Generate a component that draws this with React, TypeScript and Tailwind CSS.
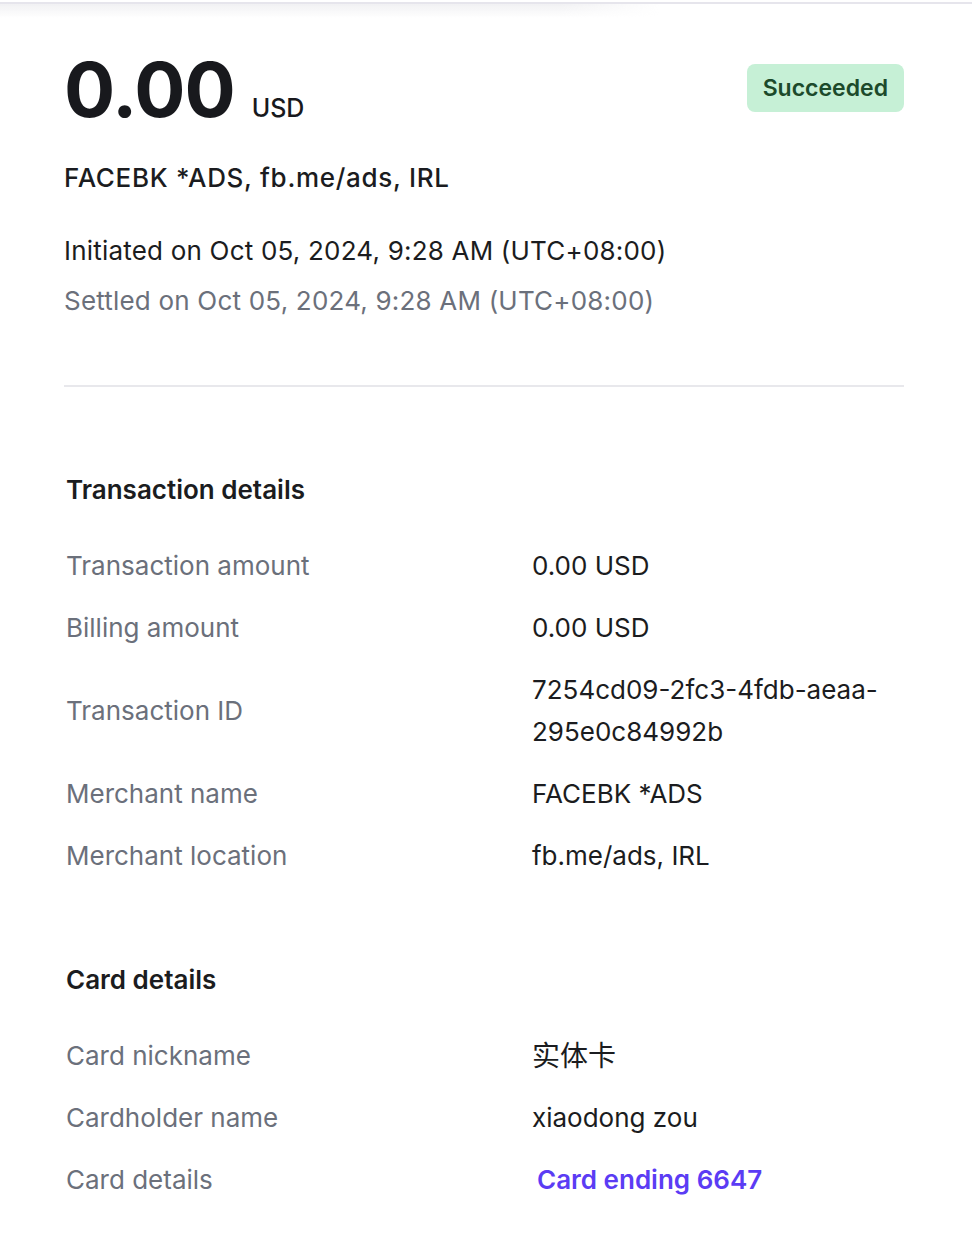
import React from "react";

const rowsTx: { label: string; value: React.ReactNode }[] = [
  { label: "Transaction amount", value: "0.00 USD" },
  { label: "Billing amount", value: "0.00 USD" },
  { label: "Transaction ID", value: <>7254cd09-2fc3-4fdb-aeaa-<br />295e0c84992b</> },
  { label: "Merchant name", value: "FACEBK *ADS" },
  { label: "Merchant location", value: "fb.me/ads, IRL" },
];

function Row({ label, value }: { label: string; value: React.ReactNode }) {
  return (
    <div className="grid grid-cols-[466px_1fr] items-center py-[10px]">
      <div className="text-[26px] leading-[42px] text-[#6b707b]">{label}</div>
      <div className="h-auto text-[26px] leading-[42px] text-[#1b1c20]">{value}</div>
    </div>
  );
}

export default function App() {
  return (
    <div
      className="relative min-h-[1252px] bg-white"
      style={{ fontFamily: 'Inter, "Noto Sans CJK SC", sans-serif' }}
    >
      <div className="pt-[2px]">
        <div className="h-[2px] bg-[#e6e5ec]" />
      </div>
      <div className="pointer-events-none absolute left-0 top-[4px] h-[14px] w-[660px] bg-gradient-to-b from-[#f1f1f3] to-transparent [mask-image:linear-gradient(to_right,black_85%,transparent)]" />

      <div className="pl-16 pr-[68px] pt-[47px]">
        <div className="flex items-start justify-between">
          <div className="flex items-baseline">
            <span className="text-[76px] font-bold leading-[76px] tracking-[-1px] text-[#18191d]">0.00</span>
            <span className="ml-[17px] text-[25px] font-medium text-[#18191d]">USD</span>
          </div>
          <div className="mt-[13px] rounded-[8px] bg-[#c6f0d6] px-[16px] py-[8px] text-[23px] font-semibold leading-[32px] text-[#1c4a2b]">
            Succeeded
          </div>
        </div>

        <div className="mt-[29px] text-[26px] font-medium leading-[42px] tracking-[0.7px] text-[#1b1c20]">
          FACEBK *ADS, fb.me/ads, IRL
        </div>
        <div className="mt-[31px] text-[26px] leading-[42px] tracking-[0.2px] text-[#1b1c20]">
          Initiated on Oct 05, 2024, 9:28 AM (UTC+08:00)
        </div>
        <div className="mt-[8px] text-[26px] leading-[42px] tracking-[0.2px] text-[#6b707b]">
          Settled on Oct 05, 2024, 9:28 AM (UTC+08:00)
        </div>

        <div className="mt-[63px] h-[2px] bg-[#e8e8ec]" />

        <div className="pl-[2px]">
          <div className="mt-[82px] text-[26px] font-semibold leading-[42px] text-[#1b1c20]">
            Transaction details
          </div>
          <div className="mt-[24px]">
            {rowsTx.map((r) => (
              <Row key={r.label} label={r.label} value={r.value} />
            ))}
          </div>

          <div className="mt-[72px] text-[26px] font-semibold leading-[42px] text-[#1b1c20]">
            Card details
          </div>
          <div className="mt-[24px]">
            <Row
              label="Card nickname"
              value={<span className="block h-[42px] text-[28px] leading-[42px]">实体卡</span>}
            />
            <Row label="Cardholder name" value="xiaodong zou" />
            <Row
              label="Card details"
              value={
                <a className="ml-[5px] font-semibold text-[#5b3cf4]" href="#">
                  Card ending 6647
                </a>
              }
            />
          </div>
        </div>
      </div>
    </div>
  );
}
